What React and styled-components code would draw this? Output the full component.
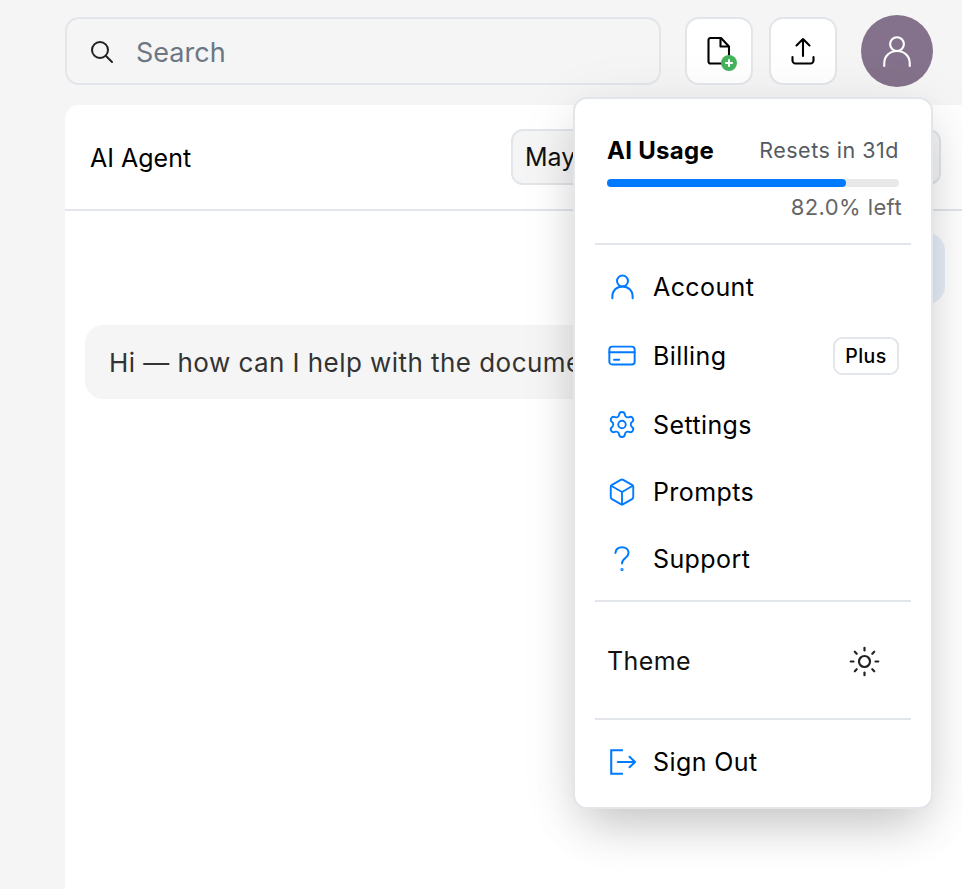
import React from "react";
import styled, { createGlobalStyle } from "styled-components";
import { Settings, Box, Sun } from "lucide-react";

const Global = createGlobalStyle`
  html, body {
    margin: 0;
    height: 100%;
    overflow: hidden;
    background: #f5f5f5;
  }
  * { box-sizing: border-box; }
  body {
    font-family: Inter, "Noto Sans", sans-serif;
    color: #000;
  }
`;

const Page = styled.div`
  position: relative;
  width: 962px;
  height: 889px;
  padding: 15px 0 0 65px;
  overflow: hidden;
`;

const Toolbar = styled.div`
  display: flex;
  align-items: center;
  height: 72px;
  padding-right: 29px;
`;

const SearchBox = styled.div`
  display: flex;
  align-items: center;
  gap: 22px;
  width: 596px;
  height: 68px;
  padding: 2px 23px 0;
  background: #f5f5f5;
  border: 2px solid #e2e5ea;
  border-radius: 14px;
  margin-right: 24px;
  color: #6c7783;
  font-size: 27px;
`;

const ToolButton = styled.button`
  position: relative;
  display: flex;
  align-items: center;
  justify-content: center;
  width: 68px;
  height: 68px;
  margin-right: ${p => p.$gap}px;
  padding: 0;
  background: #fff;
  border: 2px solid #e2e5ea;
  border-radius: 14px;
`;

const AddBadge = styled.span`
  position: absolute;
  right: 14px;
  bottom: 12px;
  width: 16px;
  height: 16px;
  display: flex;
`;

const Avatar = styled.div`
  display: flex;
  align-items: center;
  justify-content: center;
  width: 72px;
  height: 72px;
  border-radius: 50%;
  background: #84718b;
  color: #fff;
`;

const Panel = styled.div`
  margin-top: 18px;
  height: 800px;
  background: #fff;
  border-radius: 14px 0 0 0;
`;

const PanelHeader = styled.div`
  display: flex;
  align-items: center;
  justify-content: space-between;
  height: 106px;
  padding: 0 21px 0 25px;
  border-bottom: 2px solid #e2e5ea;
  font-size: 25px;
`;

const AgentTitle = styled.span`
  padding-top: 2px;
`;

const MonthSelect = styled.div`
  display: flex;
  align-items: center;
  width: 430px;
  height: 56px;
  padding: 0 12px;
  background: #f5f5f5;
  border: 2px solid #e2e5ea;
  border-radius: 12px;
  color: #111;
  font-size: 25px;
`;

const Chat = styled.div`
  display: flex;
  flex-direction: column;
  gap: 21px;
  padding: 22px 17px 0 20px;
`;

const UserBubble = styled.div`
  align-self: flex-end;
  width: 120px;
  height: 71px;
  background: #e8eff9;
  border-radius: 18px;
`;

const AgentBubble = styled.div`
  align-self: flex-start;
  height: 74px;
  padding: 0 24px;
  display: flex;
  align-items: center;
  background: #f5f5f5;
  border-radius: 18px;
  color: #333;
  font-size: 26px;
  letter-spacing: 0.45px;
  white-space: nowrap;
`;

const Menu = styled.div`
  position: absolute;
  left: 573px;
  top: 97px;
  width: 360px;
  height: 712px;
  background: #fff;
  border: 2px solid #e2e5ea;
  border-radius: 14px;
  box-shadow: 0 25px 50px -12px rgba(0, 0, 0, 0.2), 0 8px 60px rgba(0, 0, 0, 0.08);
  padding: 0 20px;
`;

const Usage = styled.div`
  height: 146px;
  padding: 37px 12px 0;
  border-bottom: 2px solid #e2e5ea;
`;

const UsageTop = styled.div`
  display: flex;
  align-items: center;
  justify-content: space-between;
  height: 28px;
`;

const UsageTitle = styled.span`
  font-size: 24px;
  font-weight: 700;
  letter-spacing: 0.3px;
`;

const UsageReset = styled.span`
  font-size: 21.5px;
  color: #555b63;
  letter-spacing: 0.5px;
`;

const Track = styled.div`
  height: 8px;
  margin-top: 15px;
  background: #e8e8e8;
  border-radius: 4px;
`;

const Fill = styled.div`
  height: 100%;
  background: #007aff;
  border-radius: 4px;
`;

const UsageLeft = styled.div`
  margin-top: 7px;
  margin-right: -3px;
  text-align: right;
  font-size: 22px;
  line-height: 26px;
  color: #666;
  letter-spacing: 0.4px;
`;

const Section = styled.div`
  padding: ${p => p.$pad};
  border-bottom: ${p => (p.$last ? "none" : "2px solid #e2e5ea")};
`;

const Row = styled.div`
  display: flex;
  align-items: center;
  min-height: ${p => (p.$tall ? 71 : 67)}px;
  padding: 0 12px;
  font-size: 25px;
  letter-spacing: 0.4px;
`;

const RowIcon = styled.span`
  display: flex;
  align-items: center;
  justify-content: center;
  width: 30px;
  margin-right: 16px;
  color: #007aff;
`;

const Plan = styled.span`
  margin-left: auto;
  display: flex;
  align-items: center;
  justify-content: center;
  width: 66px;
  height: 38px;
  border: 2px solid #e2e5ea;
  border-radius: 9px;
  font-size: 19.5px;
  font-weight: 500;
`;

const ThemeRow = styled.div`
  display: flex;
  align-items: center;
  justify-content: space-between;
  height: 116px;
  padding: 2px 30px 0 12px;
  font-size: 25px;
  letter-spacing: 0.4px;
  color: #111;
`;

const Line = ({ size, children, width = 2 }) => (
  <svg
    width={size}
    height={size}
    viewBox="0 0 32 32"
    fill="none"
    stroke="currentColor"
    strokeWidth={width}
    strokeLinecap="round"
    strokeLinejoin="round"
  >
    {children}
  </svg>
);

const PersonGlyph = ({ size, width }) => (
  <Line size={size} width={width}>
    <circle cx="16" cy="9.5" r="6.500" />
    <path d="M4 30v-2.500c0-6.500 5-11.500 12-11.500s12 5 12 11.500v2.500" />
  </Line>
);

const Card = () => (
  <Line size={32} width={2.1}>
    <rect x="2.500" y="6" width="27" height="19" rx="3" />
    <path d="M2.500 12h27" />
    <path d="M7.500 20h5.500" />
  </Line>
);

const Question = () => (
  <Line size={28} width={2.3}>
    <path d="M8.500 9c.4-4 3.500-6.500 7.500-6.500 4.300 0 7.500 2.700 7.500 6.300 0 3-1.600 4.400-3.600 6-2.300 1.800-3.900 3.200-3.900 6.200" />
    <circle cx="16" cy="28" r="0.7" />
  </Line>
);

const SignOut = () => (
  <Line size={30} width={2.2}>
    <path d="M17 3.500H4.500v25H17" strokeLinecap="butt" strokeLinejoin="miter" />
    <path d="M11.500 16h18.500M24 10.500l6 5.500-6 5.500" />
  </Line>
);

const menuItems = [
  { label: "Account", icon: <PersonGlyph size={27} width={2.400} /> },
  { label: "Billing", icon: <Card />, plan: "Plus" },
  { label: "Settings", icon: <Settings size={33} strokeWidth={1.5} /> },
  { label: "Prompts", icon: <Box size={34} strokeWidth={1.5} /> },
  { label: "Support", icon: <Question /> },
];

export default function App() {
  return (
    <Page>
      <Global />
      <Toolbar>
        <SearchBox>
          <svg width="24" height="24" viewBox="0 0 24 24" fill="none" stroke="#222" strokeWidth="2" strokeLinecap="round">
            <circle cx="10" cy="10" r="8" />
            <path d="M16 16l6 6" />
          </svg>
          Search
        </SearchBox>
        <ToolButton $gap={16}>
          <svg width="28" height="32" viewBox="0 0 28 32" fill="none" stroke="#000" strokeWidth="2.1" strokeLinejoin="round">
            <path d="M5.500 3h10.500l8 8.500v15a2 2 0 0 1-2 2h-16.500a2 2 0 0 1-2-2v-21.500a2 2 0 0 1 2-2z" />
            <path d="M15.500 3v8.500h8.500" />
          </svg>
          <AddBadge>
            <svg width="16" height="16" viewBox="0 0 16 16">
              <circle cx="8" cy="8" r="8" fill="#45b35d" />
              <path d="M8 4.200v7.600M4.200 8h7.600" stroke="#fff" strokeWidth="2" />
            </svg>
          </AddBadge>
        </ToolButton>
        <ToolButton $gap={24}>
          <svg width="24" height="28" viewBox="0 0 24 28" fill="none" stroke="#000" strokeWidth="2.1" strokeLinecap="round" strokeLinejoin="round">
            <path d="M12 19V2M5.500 8.500L12 2l6.500 6.500" />
            <path d="M1.500 20v3.500a3 3 0 0 0 3 3h15a3 3 0 0 0 3-3V20" />
          </svg>
        </ToolButton>
        <Avatar>
          <PersonGlyph size={34} width={2} />
        </Avatar>
      </Toolbar>

      <Panel>
        <PanelHeader>
          <AgentTitle>AI Agent</AgentTitle>
          <MonthSelect>May</MonthSelect>
        </PanelHeader>
        <Chat>
          <UserBubble />
          <AgentBubble>Hi — how can I help with the document?</AgentBubble>
        </Chat>
      </Panel>

      <Menu>
        <Usage>
          <UsageTop>
            <UsageTitle>AI Usage</UsageTitle>
            <UsageReset>Resets in 31d</UsageReset>
          </UsageTop>
          <Track>
            <Fill style={{ width: "82%" }} />
          </Track>
          <UsageLeft>82.0% left</UsageLeft>
        </Usage>
        <Section $pad="8px 0">
          {menuItems.map(item => (
            <Row key={item.label} $tall={!!item.plan}>
              <RowIcon>{item.icon}</RowIcon>
              {item.label}
              {item.plan && <Plan>{item.plan}</Plan>}
            </Row>
          ))}
        </Section>
        <Section $pad="0">
          <ThemeRow>
            Theme
            <Sun size={33} strokeWidth={1.6} color="#222" />
          </ThemeRow>
        </Section>
        <Section $pad="8px 0 0" $last>
          <Row>
            <RowIcon><SignOut /></RowIcon>
            Sign Out
          </Row>
        </Section>
      </Menu>
    </Page>
  );
}
